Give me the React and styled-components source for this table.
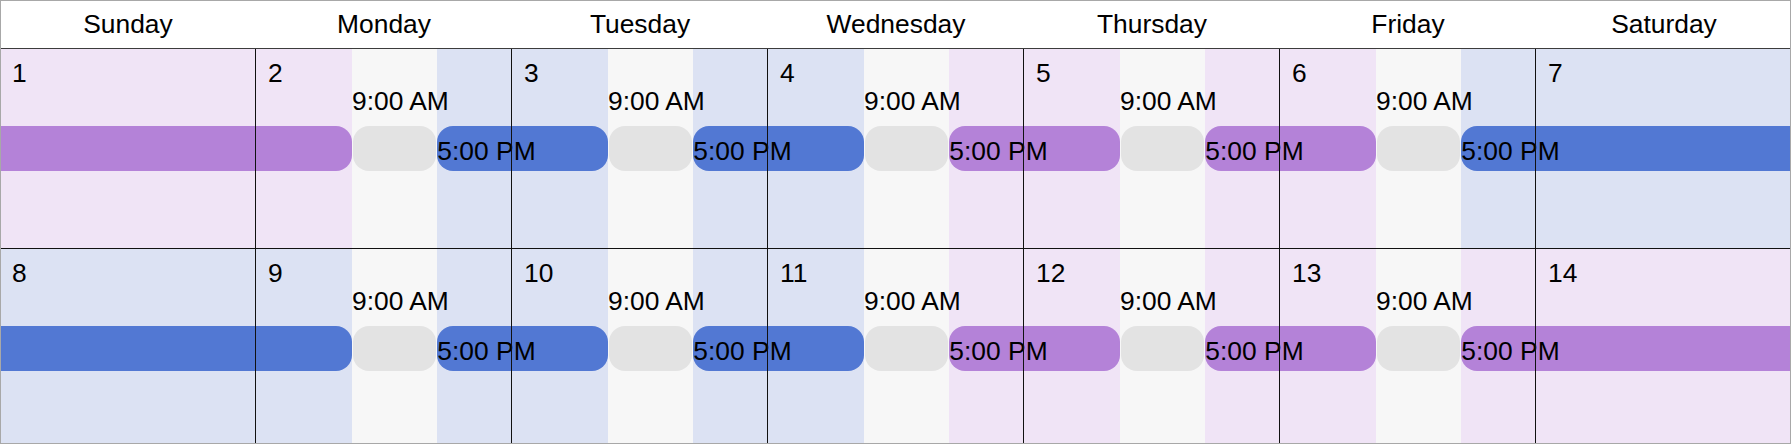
import React from "react";
import styled, { createGlobalStyle } from "styled-components";

const GlobalStyle = createGlobalStyle`
  html, body {
    margin: 0;
    padding: 0;
    background: #ffffff;
  }
  body {
    font-family: "Liberation Sans", Arial, sans-serif;
    color: #000;
  }
`;

const COL = 256;
const FONT = "26.4px";

const palette = {
  purple: { tint: "#f0e4f6", bar: "#b482d8" },
  blue: { tint: "#dce2f3", bar: "#5278d3" },
  gray: { tint: "#f7f7f7", bar: "#e3e3e3" },
};

const DAY_NAMES = [
  "Sunday",
  "Monday",
  "Tuesday",
  "Wednesday",
  "Thursday",
  "Friday",
  "Saturday",
];

const shifts = (startColor, pattern, endColor) => {
  const segs = [{ kind: startColor, hours: 33, openStart: true }];
  pattern.forEach((c) => {
    segs.push({ kind: "gray", hours: 8, label: "9:00 AM" });
    segs.push({ kind: c, hours: 16, label: "5:00 PM" });
  });
  segs.push({ kind: "gray", hours: 8, label: "9:00 AM" });
  segs.push({ kind: endColor, hours: 31, label: "5:00 PM", openEnd: true });
  return segs;
};

const WEEKS = [
  {
    days: [1, 2, 3, 4, 5, 6, 7],
    segments: shifts("purple", ["blue", "blue", "purple", "purple"], "blue"),
  },
  {
    days: [8, 9, 10, 11, 12, 13, 14],
    segments: shifts("blue", ["blue", "blue", "purple", "purple"], "purple"),
  },
];

const Frame = styled.div`
  position: relative;
  width: 1791px;
  height: 444px;
  overflow: hidden;
  box-sizing: border-box;

  &::after {
    content: "";
    position: absolute;
    inset: 0;
    border: 1px solid #a8a8a8;
    pointer-events: none;
    z-index: 5;
  }
`;

const Calendar = styled.div`
  width: ${COL * 7}px;
  display: flex;
  flex-direction: column;
  font-size: ${FONT};
  line-height: 30px;
`;

const HeaderRow = styled.div`
  display: grid;
  grid-template-columns: repeat(7, ${COL}px);
  height: 49px;
  box-sizing: border-box;
  border-bottom: 1px solid #3c3c3c;
  background: #fff;
`;

const HeaderCell = styled.div`
  display: flex;
  align-items: center;
  justify-content: center;
  padding-bottom: 1px;
`;

const WeekRow = styled.div`
  position: relative;
  height: 200px;
  box-sizing: border-box;
  border-bottom: 1px solid #111;
`;

const Track = styled.div`
  position: absolute;
  inset: 0;
  display: flex;
  z-index: 0;
`;

const Segment = styled.div`
  flex: ${(p) => p.$hours} 1 0;
  min-width: 0;
  display: flex;
  flex-direction: column;
  padding-top: 37px;
  background: ${(p) => palette[p.$kind].tint};
`;

const AboveLabel = styled.div`
  position: relative;
  z-index: 1;
  height: 30px;
  margin-bottom: 10px;
  white-space: nowrap;
`;

const Bar = styled.div`
  position: relative;
  z-index: 1;
  height: 45px;
  box-sizing: border-box;
  padding-top: 10px;
  white-space: nowrap;
  background: ${(p) => palette[p.$kind].bar};
  margin: ${(p) => (p.$kind === "gray" ? "0 1px" : "0")};
  border-radius: ${(p) =>
    `${p.$openStart ? 0 : 16}px ${p.$openEnd ? 0 : 16}px ${
      p.$openEnd ? 0 : 16
    }px ${p.$openStart ? 0 : 16}px`};
`;

const DayGrid = styled.div`
  position: relative;
  z-index: 2;
  height: 100%;
  display: grid;
  grid-template-columns: repeat(7, ${COL}px);
  pointer-events: none;
`;

const DayCell = styled.div`
  box-sizing: border-box;
  padding: 9px 12px;
  border-right: ${(p) => (p.$last ? "none" : "1px solid #111")};
`;

function Week({ week }) {
  return (
    <WeekRow>
      <Track>
        {week.segments.map((s, i) => (
          <Segment key={i} $hours={s.hours} $kind={s.kind}>
            <AboveLabel>{s.kind === "gray" ? s.label : ""}</AboveLabel>
            <Bar $kind={s.kind} $openStart={s.openStart} $openEnd={s.openEnd}>
              {s.kind !== "gray" && s.label ? s.label : ""}
            </Bar>
          </Segment>
        ))}
      </Track>
      <DayGrid>
        {week.days.map((d, i) => (
          <DayCell key={d} $last={i === 6}>
            {d}
          </DayCell>
        ))}
      </DayGrid>
    </WeekRow>
  );
}

export default function App() {
  return (
    <>
      <GlobalStyle />
      <Frame>
        <Calendar>
          <HeaderRow>
            {DAY_NAMES.map((n) => (
              <HeaderCell key={n}>{n}</HeaderCell>
            ))}
          </HeaderRow>
          {WEEKS.map((w, i) => (
            <Week key={i} week={w} />
          ))}
        </Calendar>
      </Frame>
    </>
  );
}
